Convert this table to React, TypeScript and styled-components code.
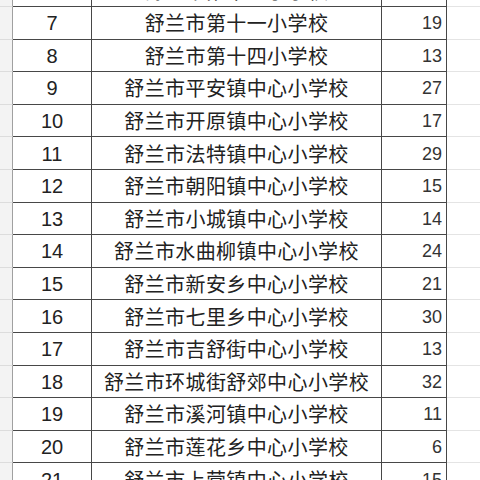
import React from 'react';
import styled, { createGlobalStyle } from 'styled-components';

const GlobalStyle = createGlobalStyle`
  html, body {
    margin: 0;
    padding: 0;
    background: #ffffff;
  }
`;

const ROW_HEIGHT = 32.6;

const rows: [number, string, string][] = [
  [6, '舒兰市第十二小学校', ''],
  [7, '舒兰市第十一小学校', '19'],
  [8, '舒兰市第十四小学校', '13'],
  [9, '舒兰市平安镇中心小学校', '27'],
  [10, '舒兰市开原镇中心小学校', '17'],
  [11, '舒兰市法特镇中心小学校', '29'],
  [12, '舒兰市朝阳镇中心小学校', '15'],
  [13, '舒兰市小城镇中心小学校', '14'],
  [14, '舒兰市水曲柳镇中心小学校', '24'],
  [15, '舒兰市新安乡中心小学校', '21'],
  [16, '舒兰市七里乡中心小学校', '30'],
  [17, '舒兰市吉舒街中心小学校', '13'],
  [18, '舒兰市环城街舒郊中心小学校', '32'],
  [19, '舒兰市溪河镇中心小学校', '11'],
  [20, '舒兰市莲花乡中心小学校', '6'],
  [21, '舒兰市上营镇中心小学校', '15'],
];

const Viewport = styled.div`
  width: 480px;
  height: 480px;
  overflow: hidden;
  background: #ffffff;
`;

const Sheet = styled.div`
  display: flex;
  flex-direction: column;
  margin-top: ${7 - ROW_HEIGHT}px;
`;

const Row = styled.div`
  display: grid;
  grid-template-columns: 13px 79px 290px 65px 1fr;
  height: ${ROW_HEIGHT}px;
`;

const Gutter = styled.div`
  background: #f3f3f3;
  border-bottom: 1px solid #dcdcdc;
  border-right: 1.5px solid #a0a0a0;
`;

const Cell = styled.div<{ $align?: 'center' | 'right' }>`
  display: flex;
  align-items: center;
  justify-content: ${(p) => (p.$align === 'right' ? 'flex-end' : 'center')};
  padding-right: ${(p) => (p.$align === 'right' ? '4px' : '0')};
  border-bottom: 1.5px solid #474747;
  border-right: 1.5px solid #474747;
  color: #222222;
  white-space: nowrap;
  overflow: hidden;
`;

const NumCell = styled(Cell)`
  font-family: 'Liberation Sans', 'Noto Sans CJK SC', sans-serif;
  font-size: 20px;
  padding-top: 2px;
`;

const NameCell = styled(Cell)`
  font-family: 'Noto Sans CJK SC', sans-serif;
  font-size: 20px;
  font-weight: 400;
  letter-spacing: 0.4px;
`;

const CountCell = styled(Cell)`
  font-family: 'Liberation Sans', 'Noto Sans CJK SC', sans-serif;
  font-size: 18px;
  color: #333333;
  padding-top: 2px;
`;

const Blank = styled.div`
  border-bottom: 1px solid #e4e4e4;
`;

export default function App() {
  return (
    <>
      <GlobalStyle />
      <Viewport>
        <Sheet>
          {rows.map(([n, name, count]) => (
            <Row key={n}>
              <Gutter />
              <NumCell>{n}</NumCell>
              <NameCell>{name}</NameCell>
              <CountCell $align="right">{count}</CountCell>
              <Blank />
            </Row>
          ))}
        </Sheet>
      </Viewport>
    </>
  );
}
